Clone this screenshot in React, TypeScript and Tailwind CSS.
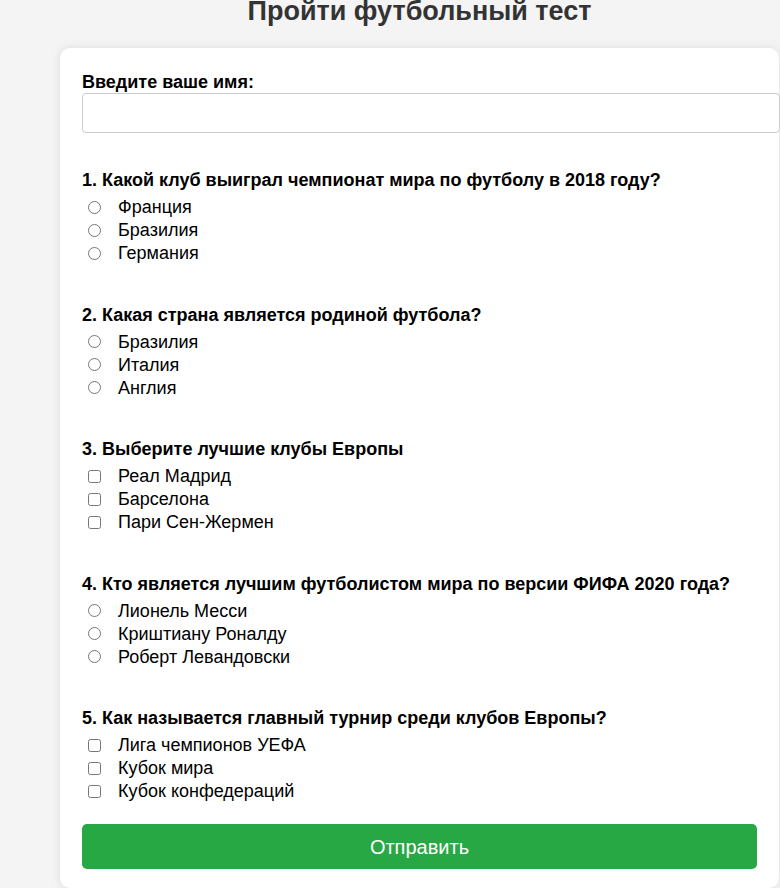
import React from "react";

type Q = { title: string; type: "radio" | "checkbox"; options: string[] };

const questions: Q[] = [
  { title: "1. Какой клуб выиграл чемпионат мира по футболу в 2018 году?", type: "radio", options: ["Франция", "Бразилия", "Германия"] },
  { title: "2. Какая страна является родиной футбола?", type: "radio", options: ["Бразилия", "Италия", "Англия"] },
  { title: "3. Выберите лучшие клубы Европы", type: "checkbox", options: ["Реал Мадрид", "Барселона", "Пари Сен-Жермен"] },
  { title: "4. Кто является лучшим футболистом мира по версии ФИФА 2020 года?", type: "radio", options: ["Лионель Месси", "Криштиану Роналду", "Роберт Левандовски"] },
  { title: "5. Как называется главный турнир среди клубов Европы?", type: "checkbox", options: ["Лига чемпионов УЕФА", "Кубок мира", "Кубок конфедераций"] },
];

export default function App() {
  return (
    <div className="min-h-screen overflow-hidden bg-[#f4f4f4] font-['Liberation_Sans',Arial,sans-serif] text-black">
      <div className="ml-[60px] w-[719px]">
        <h1 className="-mt-[5px] mb-[21px] text-center text-[27px] font-bold leading-[32px] text-[#333]">
          Пройти футбольный тест
        </h1>
        <div className="rounded-[10px] bg-white px-[22px] pb-[19px] pt-[25px] shadow-[0_0_10px_rgba(0,0,0,0.1)]">
          <label className="block text-[18px] font-bold leading-[18px]">Введите ваше имя:</label>
          <input
            type="text"
            className="mt-[2px] block h-[40px] w-[698px] rounded-[4px] border border-[#ccc] bg-white px-[10px] text-[16px]"
          />
          <div className="mt-[37px] flex flex-col gap-[40px]">
            {questions.map((q, qi) => (
              <div key={qi}>
                <div className="text-[18px] font-bold leading-[20px]">{q.title}</div>
                <div className="mt-[5.5px] flex flex-col">
                  {q.options.map((o, oi) => (
                    <label key={oi} className="flex h-[23px] items-center text-[18px] leading-[20px]">
                      <input
                        type={q.type}
                        name={`q${qi}`}
                        className="ml-[6px] mr-[17px] h-[13px] w-[13px]"
                      />
                      <span>{o}</span>
                    </label>
                  ))}
                </div>
              </div>
            ))}
          </div>
          <button className="mt-[21.5px] block h-[45px] w-full rounded-[5px] bg-[#28a745] text-[20px] text-white">
            Отправить
          </button>
        </div>
      </div>
    </div>
  );
}
